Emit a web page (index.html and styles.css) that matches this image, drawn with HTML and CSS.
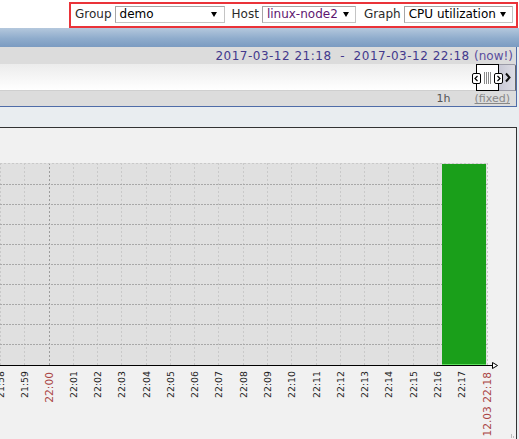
FILE: index.html
```html
<!DOCTYPE html>
<html>
<head>
<meta charset="utf-8">
<title>Graph</title>
<link rel="stylesheet" href="styles.css">
</head>
<body>
<div class="topbar">
  <form class="filter">
    <span class="lbl lbl-group">Group</span>
    <div class="sel sel-group"><span class="val">demo</span><svg class="caret" width="6" height="5" viewBox="0 0 6 5"><polygon points="0,0 6,0 3,5" fill="#000"/></svg></div>
    <span class="lbl lbl-host">Host</span>
    <div class="sel sel-host"><span class="val host-val">linux-node2</span><svg class="caret" width="6" height="5" viewBox="0 0 6 5"><polygon points="0,0 6,0 3,5" fill="#000"/></svg></div>
    <span class="lbl lbl-graph">Graph</span>
    <div class="sel sel-graph"><span class="val">CPU utilization</span><svg class="caret" width="6" height="5" viewBox="0 0 6 5"><polygon points="0,0 6,0 3,5" fill="#000"/></svg></div>
  </form>
</div>
<div class="bluebar"></div>
<div class="timebox">
  <div class="trow trow-dates"><span class="dates">2017-03-12 21:18  -  2017-03-12 22:18 </span><span class="now">(now!)</span></div>
  <div class="trow trow-scroll">
    <div class="scroll">
      <div class="thumb">
        <span class="handle handle-l"><svg width="9" height="11" viewBox="0 0 9 11"><rect x="0.5" y="0.5" width="8" height="10" rx="1.5" fill="#fff" stroke="#000"/><path d="M5.5 3 L3 5.5 L5.5 8" fill="none" stroke="#000" stroke-width="1.2"/></svg></span>
        <span class="grip"></span>
        <span class="handle handle-r"><svg width="9" height="11" viewBox="0 0 9 11"><rect x="0.5" y="0.5" width="8" height="10" rx="1.5" fill="#fff" stroke="#000"/><path d="M3.5 3 L6 5.5 L3.5 8" fill="none" stroke="#000" stroke-width="1.2"/></svg></span>
      </div>
      <div class="next"><svg width="8" height="11" viewBox="0 0 8 11"><path d="M2 1.5 L5.5 5.5 L2 9.5" fill="none" stroke="#111" stroke-width="2"/></svg></div>
    </div>
  </div>
  <div class="trow trow-period"><span class="period">1h</span><span class="fixed">(fixed)</span></div>
</div>
<div class="graphbox">
  <svg class="chart" width="516" height="320" viewBox="0 0 516 320">
    <rect x="0" y="35" width="487" height="202" fill="#e0e0e0"/>
    <path d="M0.5 35V237M24.5 35V237M73.5 35V237M97.5 35V237M121.5 35V237M146.5 35V237M170.5 35V237M194.5 35V237M218.5 35V237M243.5 35V237M267.5 35V237M291.5 35V237M316.5 35V237M340.5 35V237M364.5 35V237M388.5 35V237M413.5 35V237M437.5 35V237M461.5 35V237M487.5 35V237" stroke="#c9c9c9" stroke-dasharray="2 2" fill="none"/>
    <path d="M49.5 35V237" stroke="#9c9c9c" stroke-dasharray="2 2" fill="none"/>
    <path d="M0 35.5H488" stroke="#c9c9c9" stroke-dasharray="2 2" fill="none"/>
    <path d="M0 56.5H487M0 76.5H487M0 96.5H487M0 116.5H487M0 136.5H487M0 156.5H487M0 176.5H487M0 196.5H487M0 216.5H487" stroke="#a8a8a8" stroke-dasharray="2 1" fill="none"/>
    <rect x="442" y="36" width="44" height="200" fill="#1a9f1a"/>
    <rect x="442" y="236" width="44" height="1" fill="#5fe05f"/>
    <path d="M0 237.5H492" stroke="#000" fill="none"/>
    <polygon points="492.5,234.5 497.5,237.5 492.5,240.5" fill="#fff" stroke="#000"/>
    <g class="lb">
      <text transform="translate(0.5 243) rotate(-90)" y="3.4">21:58</text>
      <text transform="translate(24.5 243) rotate(-90)" y="3.4">21:59</text>
      <text class="red" transform="translate(49.5 244) rotate(-90)" y="3.9">22:00</text>
      <text transform="translate(73.5 243) rotate(-90)" y="3.4">22:01</text>
      <text transform="translate(97.5 243) rotate(-90)" y="3.4">22:02</text>
      <text transform="translate(121.5 243) rotate(-90)" y="3.4">22:03</text>
      <text transform="translate(146.5 243) rotate(-90)" y="3.4">22:04</text>
      <text transform="translate(170.5 243) rotate(-90)" y="3.4">22:05</text>
      <text transform="translate(194.5 243) rotate(-90)" y="3.4">22:06</text>
      <text transform="translate(218.5 243) rotate(-90)" y="3.4">22:07</text>
      <text transform="translate(243.5 243) rotate(-90)" y="3.4">22:08</text>
      <text transform="translate(267.5 243) rotate(-90)" y="3.4">22:09</text>
      <text transform="translate(291.5 243) rotate(-90)" y="3.4">22:10</text>
      <text transform="translate(316.5 243) rotate(-90)" y="3.4">22:11</text>
      <text transform="translate(340.5 243) rotate(-90)" y="3.4">22:12</text>
      <text transform="translate(364.5 243) rotate(-90)" y="3.4">22:13</text>
      <text transform="translate(388.5 243) rotate(-90)" y="3.4">22:14</text>
      <text transform="translate(413.5 243) rotate(-90)" y="3.4">22:15</text>
      <text transform="translate(437.5 243) rotate(-90)" y="3.4">22:16</text>
      <text transform="translate(461.5 243) rotate(-90)" y="3.4">22:17</text>
      <text class="red" transform="translate(487 244) rotate(-90)" y="3.9">12.03 22:18</text>
    </g>
    <path d="M511.5 310V306M513.5 310V308" stroke="#bdbdbd" fill="none"/>
  </svg>
</div>
</body>
</html>
```

FILE: styles.css
```css
html, body {
  margin: 0;
  padding: 0;
}
body {
  width: 519px;
  height: 439px;
  overflow: hidden;
  background: #e9edf0;
  font-family: "DejaVu Sans", Verdana, sans-serif;
  font-size: 12px;
  color: #222;
}

/* header filter */
.topbar {
  background: #fff;
  height: 28px;
  display: flex;
  justify-content: flex-end;
  align-items: flex-start;
}
.filter {
  margin: 2px 1px 0 0;
  width: 449px;
  height: 26px;
  box-sizing: border-box;
  border: 2px solid #ea3339;
  display: flex;
  align-items: flex-start;
  padding-left: 4px;
}
.lbl {
  line-height: 17px;
  margin-top: 2px;
  color: #2a2a2a;
  white-space: nowrap;
}
.lbl-host { margin-left: 7px; }
.lbl-graph { margin-left: 8px; }
.sel {
  margin-top: 2px;
  margin-left: 3px;
  height: 17px;
  box-sizing: border-box;
  border: 1px solid #a6a6a6;
  border-right-color: #c4c4c4;
  border-bottom-color: #c4c4c4;
  background: #fff;
  display: flex;
  align-items: center;
  padding-left: 4px;
}
.sel-group { width: 110px; }
.sel-host { width: 94px; }
.sel-graph { width: 109px; }
.val {
  color: #000;
  line-height: 15px;
  white-space: nowrap;
}
.host-val { color: #5e1670; }
.caret {
  display: block;
  margin-left: auto;
  margin-right: 7px;
}
.sel-host .caret, .sel-graph .caret { margin-right: 6px; }

.bluebar {
  height: 19px;
  background: linear-gradient(#b4c8dd, #8faccc 55%, #7b9bc1);
}

/* time bar */
.timebox {
  margin-right: 2px;
  border-right: 1px solid #4f6ca8;
  border-bottom: 1px solid #4f6ca8;
}
.trow {
  display: flex;
  align-items: center;
  justify-content: flex-end;
}
.trow-dates {
  height: 17px;
  background: #dcdcdc;
  padding-right: 3px;
  color: #43398c;
  white-space: pre;
}
.dates { letter-spacing: 0.5px; }
.now { color: #5a4d9e; }
.trow-scroll {
  height: 27px;
  align-items: stretch;
  background: linear-gradient(#ececec, #ffffff 96%, #cfcfcf 96%);
}
.scroll {
  display: flex;
  align-items: stretch;
}
.thumb {
  position: relative;
  width: 23px;
  box-sizing: border-box;
  border: 1px solid #000;
  background: #fff;
  display: flex;
  align-items: center;
  justify-content: center;
}
.grip {
  width: 7px;
  height: 12px;
  background: repeating-linear-gradient(90deg, #8a8a8a 0 1px, transparent 1px 2px);
}
.handle {
  position: absolute;
  top: 8px;
  width: 9px;
  height: 11px;
}
.handle svg { display: block; }
.handle-l { left: -5px; }
.handle-r { left: 17px; }
.next {
  width: 17px;
  box-sizing: border-box;
  border-right: 1px solid #666;
  border-top: 1px solid #9a9aa6;
  border-bottom: 1px solid #9a9aa6;
  border-top-right-radius: 2px;
  background: linear-gradient(90deg, #c9c9d6, #dcdce4);
  display: flex;
  align-items: center;
  justify-content: flex-end;
  padding-right: 3px;
}
.next svg { display: block; }
.trow-period {
  height: 15px;
  background: #dcdcdc;
  padding-right: 6px;
  font-size: 11px;
}
.period { color: #555; }
.fixed {
  color: #888;
  margin-left: 24px;
  text-decoration: underline;
}

/* graph */
.graphbox {
  margin-top: 20px;
  margin-right: 2px;
  height: 330px;
  border-top: 1px solid #333;
  border-right: 1px solid #333;
  background: #f1f1f1;
}
.chart { display: block; }
.lb text {
  font-family: "DejaVu Sans", sans-serif;
  font-size: 9.33px;
  fill: #222;
  text-anchor: end;
}
.lb text.red {
  font-size: 10.67px;
  fill: #aa4444;
}
```
